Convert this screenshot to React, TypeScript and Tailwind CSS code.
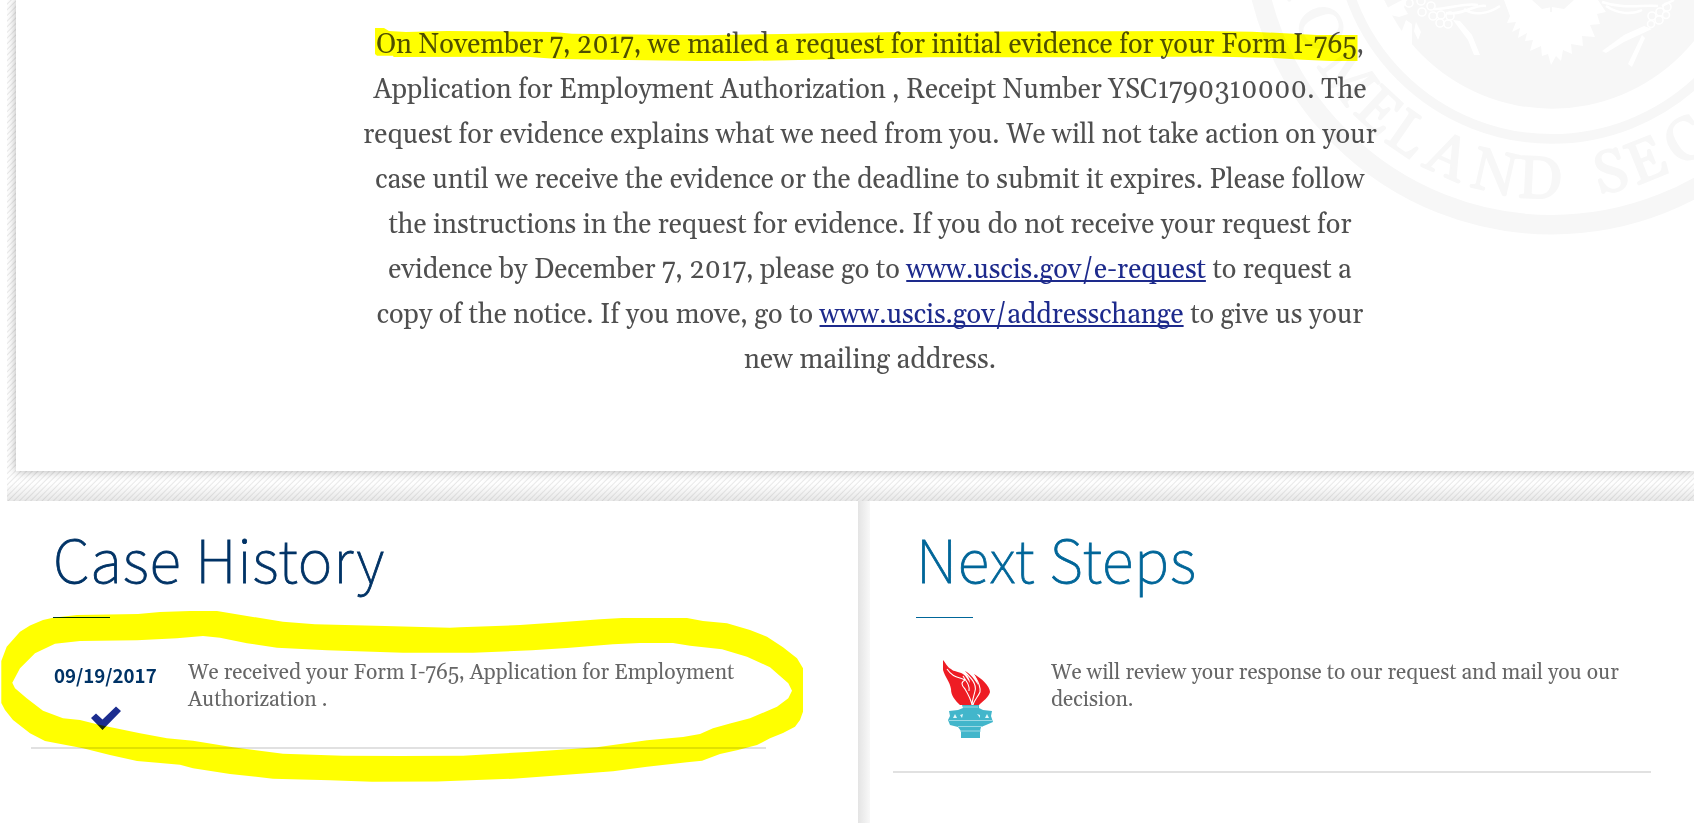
import React from "react";

const INK = "#f7f7f7";

/** Letters on the lower arc of the seal: character and angle from the bottom, in degrees. */
const SEAL_LETTERS: Array<[string, number]> = [
  ["H", 78.5],
  ["O", 66],
  ["M", 53.6],
  ["E", 43],
  ["L", 34.6],
  ["A", 24.2],
  ["N", 12.9],
  ["D", 2.7],
  ["S", -13.4],
  ["E", -21.9],
  ["C", -32],
];

function Seal() {
  return (
    <svg
      className="absolute right-0 top-0 h-[240px] w-[464px]"
      viewBox="1230 0 464 240"
      aria-hidden="true"
    >
      <g fill="none" stroke={INK}>
        <circle cx="1551.7" cy="-74.7" r="299.4" strokeWidth="19.5" />
        <circle cx="1551.7" cy="-74.7" r="213.6" strokeWidth="9.7" />
      </g>
      <circle cx="1551.7" cy="-74.7" r="183.4" fill={INK} />
      <g
        fill={INK}
        stroke={INK}
        strokeWidth="1.4"
        textAnchor="middle"
        className="font-['Gelasio','Liberation_Serif',serif] text-[60px]"
      >
        {SEAL_LETTERS.map(([ch, angle]) => (
          <text
            key={ch + angle}
            x="1551.7"
            y="198.5"
            transform={`rotate(${angle} 1551.7 -74.7)`}
          >
            {ch}
          </text>
        ))}
      </g>
      <g fill="#ffffff">
        <path d="M1504 0 L1510 16 L1507 23 L1516 22 L1512 32 L1520 28 L1518 38 L1527 33 L1525 41 L1533 40 L1530 51 L1541 46 L1542 56 L1548 54 L1551 65 L1556 56 L1561 61 L1563 50 L1572 54 L1571 44 L1583 46 L1582 36 L1595 37 L1590 25 L1600 24 L1597 14 L1606 12 L1598 0 L1574 0 L1564 9 L1552 7 L1542 9 L1532 0 Z" />
        <path d="M1370 8 L1387 8 L1402 0 L1408 0 L1404 7 L1408 14 L1399 17 L1390 15 L1380 19 L1384 13 Z" />
        <path d="M1406 20 L1412 24 L1412 48 L1405 47 L1398 41 Z" />
        <path d="M1416 22 L1421 32 L1418 40 L1414 31 Z" />
        <path d="M1453 20 L1460 21 L1472 35 L1480 55 L1474 55 L1468 40 Z" />
        <path d="M1644 26 L1652 29 L1624 42 L1606 53 L1602 51 L1624 35 Z" />
        <path d="M1642 35 L1645 38 L1632 67 L1628 64 Z" />
      </g>
      <g fill={INK} stroke="#ffffff" strokeWidth="1.6">
        <circle cx="1409" cy="3" r="4" />
        <circle cx="1421" cy="1" r="4" />
        <circle cx="1431" cy="6" r="4" />
        <circle cx="1422" cy="12" r="4" />
        <circle cx="1433" cy="16" r="4" />
        <circle cx="1441" cy="15" r="4" />
        <circle cx="1440" cy="23" r="4" />
        <circle cx="1448" cy="24" r="4" />
        <circle cx="1450" cy="16" r="4" />
        <circle cx="1652" cy="16" r="4" />
        <circle cx="1660" cy="12" r="4" />
        <circle cx="1667" cy="7" r="4" />
        <circle cx="1659" cy="20" r="4" />
        <circle cx="1651" cy="24" r="3.5" />
        <circle cx="1666" cy="15" r="3.5" />
        <path
          fill="none"
          strokeWidth="2.5"
          d="M1433 9 C1450 9 1466 2 1478 5 M1446 13 C1462 16 1474 4 1486 6 M1464 9 C1474 16 1488 14 1500 6 M1606 6 C1618 14 1632 15 1642 10 M1602 2 C1622 9 1640 5 1658 6 M1662 6 L1674 0"
        />
        <path fill="none" stroke={INK} strokeWidth="2" d="M1551 0 V12" />
      </g>
    </svg>
  );
}

function Marker() {
  return (
    <svg
      className="pointer-events-none absolute left-0 top-0 h-[823px] w-[1694px] mix-blend-multiply"
      viewBox="0 0 1694 823"
      fill="#ffff00"
      aria-hidden="true"
    >
      <path d="M375 28 H384 L389 31 L406 32 L447 31 L554 32 L572 33.7 L661 34.7 L700 35.3 L785 34 L833 33 L899 32 L1203 31 L1252 31.7 L1280 33 L1317 35 H1357.5 V61 H1331 L1303 59.7 L1267 57.7 L1210 56.5 L1110 57.3 L931 57.3 L811 59.7 L743.6 61 H699 L558 59 L526 56.7 L393.6 57 L393 55.7 H377 L375 54 Z" />
      <path
        fillRule="evenodd"
        d="M1.3 661 L6.7 646.7 L20 631.7 L30 625.5 L43 620 L53 617.7 L77 615 L138 614 L160 612 L190 611 H217 L247 616 L283 621.7 L315 624.3 L385 626 L450 627.7 L460 627.3 L520 625 L560 622.3 L600 619.3 L622 618 H687 L703 621 L727 623.3 L750 630 L767 636.7 L783 647.3 L797 658.3 L803 668.3 V711.7 L800 720 L795 726.7 L783 733 L770 738.3 L757 745 L738 750 L720 754 L702 760.7 L687 762.3 L647 766.7 L613 771.3 L550 776 L513 778.7 L437 781.5 L372 781.7 L330 780.3 L273 778.7 L230 774 L193 768.3 L180 764.7 L137 761 L110 755 L83 748.3 L45 741 L30 733.3 L13 720 L5 710 L1.3 703 Z
           M12.3 682.7 L15 688.3 L26.7 698.3 L43 710.7 L63 718.3 L80 720 L100 725 L140 733.3 L167 738.3 L193 740.7 L233 747.3 L283 753.7 L343 755.7 L400 756 L463 755.7 L527 752 L597 747.3 L647 740.3 L683 737 L700 734 L713 728.3 L730 723.5 L750 718.3 L777 706.7 L788.3 698.3 L792 690.7 L788.3 683.3 L770 667.3 L747 656.7 L722 649.3 L690 645.7 L673 643 H640 L613 644.3 L567 648 L532 650.3 L473 652.7 L403 652.7 L327 650.3 L277 647.7 L247 643.3 L220 637.7 L203 636 L177 638.3 L137 640.3 L80 641 L55 643.7 L35 653.3 L20 668.3 Z"
      />
    </svg>
  );
}

function Torch() {
  return (
    <svg className="h-[78px] w-[50px]" viewBox="0 0 50 78" aria-hidden="true">
      <path
        fill="#ee1c24"
        d="M0 0 C3 3 4 7 8 9 C11 12 15 11 20 14 C23 16 25 20 27 23 C27 19 24 15 22 11 C28 14 32 20 35 25 C35 21 33 18 31 14 C38 18 47 26 47 32 C46 37 40 41 36 45 H17 C12 40 8 36 8 29 C7 22 2 17 0 10 Z"
      />
      <path
        fill="none"
        stroke="#ffffff"
        strokeWidth="1.1"
        d="M4 9 C10 18 16 17 22 20 C18 22 18 25 22 29 C25 34 28 40 29 45 M22 12 C28 18 34 24 32 31 C31 36 29 40 29 45 M20 16 C24 22 27 26 26 31 M31 15 C34 20 38 25 37 32 C35 37 31 40 30 45"
      />
      <path
        fill="#42b6cb"
        d="M19 45 H36 V48 L40 50 L49 51 L48 56 L50 62 L43 65 L38 67 L37 71 V78 H18 V71 L15 67 L7 65 L5 60 L7 56 L6 51 L15 50 L20 48 Z"
      />
      <path fill="none" stroke="#9bdae5" strokeWidth="1" d="M20 47 H35 M6 60.5 H49 M15 66.5 H40 M17 71 H38" />
      <path
        fill="#e3f6f9"
        d="M10 58 L12 54 L14 58 Z M17 55 L20 54 L19 58 Z M34 54 L37 55 L37 58 Z M42 58 L44 54 L46 58 Z"
      />
    </svg>
  );
}

function CheckMark() {
  return (
    <svg className="h-[24px] w-[30px]" viewBox="0 0 30 24" aria-hidden="true">
      <path fill="#1c2d8f" d="M0 12 L5 7.5 L11.5 13.5 L25 0.5 L30 5 L11.5 24 Z" />
    </svg>
  );
}

const LINK =
  "text-[#1d2a8c] underline decoration-2 underline-offset-[2px] [text-decoration-skip-ink:none]";

function CaseMessage() {
  return (
    <p className="w-[1020px] whitespace-nowrap text-center font-['Gelasio','Liberation_Serif',serif] text-[27px] leading-[45px] text-[#4f4f4f]">
      On November 7, 2017, we mailed a request for initial evidence for your Form I-765,
      <br />
      Application for Employment Authorization , Receipt Number YSC1790310000. The
      <br />
      request for evidence explains what we need from you. We will not take action on your
      <br />
      case until we receive the evidence or the deadline to submit it expires. Please follow
      <br />
      the instructions in the request for evidence. If you do not receive your request for
      <br />
      evidence by December 7, 2017, please go to{" "}
      <a href="#e-request" className={LINK}>
        www.uscis.gov/e-request
      </a>{" "}
      to request a
      <br />
      copy of the notice. If you move, go to{" "}
      <a href="#addresschange" className={LINK}>
        www.uscis.gov/addresschange
      </a>{" "}
      to give us your
      <br />
      new mailing address.
    </p>
  );
}

const HEADING =
  "whitespace-nowrap font-['Noto_Sans_CJK_SC',sans-serif] text-[59px] font-thin leading-[60px] tracking-[0.8px] [-webkit-text-stroke:0.8px_currentColor]";
const BODY =
  "font-['Gelasio','Liberation_Serif',serif] text-[21px] leading-[27px] text-[#666666] whitespace-nowrap";

export default function App() {
  return (
    <div className="relative h-[823px] w-[1694px] overflow-hidden bg-white">
      <section className="ml-[7px] h-[501px] overflow-hidden bg-[linear-gradient(to_bottom,transparent_471px,transparent_484px,rgba(0,0,0,0.09)_501px),repeating-linear-gradient(135deg,#ffffff_0px,#fdfdfd_2px,#e9e9e9_3px,#ffffff_4px)] pl-[9px]">
        <div className="relative flex h-[471px] justify-start overflow-visible bg-white pl-[344px] pt-[23px] shadow-[0_0_9px_rgba(0,0,0,0.3)]">
          <Seal />
          <div className="relative">
            <CaseMessage />
          </div>
        </div>
      </section>

      <div className="flex h-[322px]">
        <section className="w-[858px] pl-[31px]">
          <div className="flex flex-col pl-[22px] pt-[27px]">
            <h2 className={`${HEADING} text-[#003366]`}>Case History</h2>
            <div className="mt-[29px] h-px w-[57px] bg-[#003366]" />
          </div>
          <div className="flex h-[131px] w-[735px] border-b-2 border-[#e1e1e1] pl-[23px] pt-[42px]">
            <div className="flex w-[134px] flex-col">
              <span className="h-[46px] font-['Noto_Sans_CJK_SC',sans-serif] text-[18.7px] font-bold leading-[29px] text-[#003366]">
                09/19/2017
              </span>
              <div className="pl-[37px]">
                <CheckMark />
              </div>
            </div>
            <p className={BODY}>
              We received your Form I-765, Application for Employment
              <br />
              Authorization .
            </p>
          </div>
        </section>

        <div className="w-[12px] bg-gradient-to-r from-[#e4e4e4] to-[#f8f8f8]" />

        <section className="flex-1 pl-[23px]">
          <div className="flex flex-col pl-[23px] pt-[27px]">
            <h2 className={`${HEADING} text-[#006699]`}>Next Steps</h2>
            <div className="mt-[29px] h-px w-[57px] bg-[#006699]" />
          </div>
          <div className="flex h-[155px] w-[758px] border-b-2 border-[#e1e1e1] pl-[50px] pt-[42px]">
            <div className="w-[108px]">
              <Torch />
            </div>
            <p className={BODY}>
              We will review your response to our request and mail you our
              <br />
              decision.
            </p>
          </div>
        </section>
      </div>

      <Marker />
    </div>
  );
}
